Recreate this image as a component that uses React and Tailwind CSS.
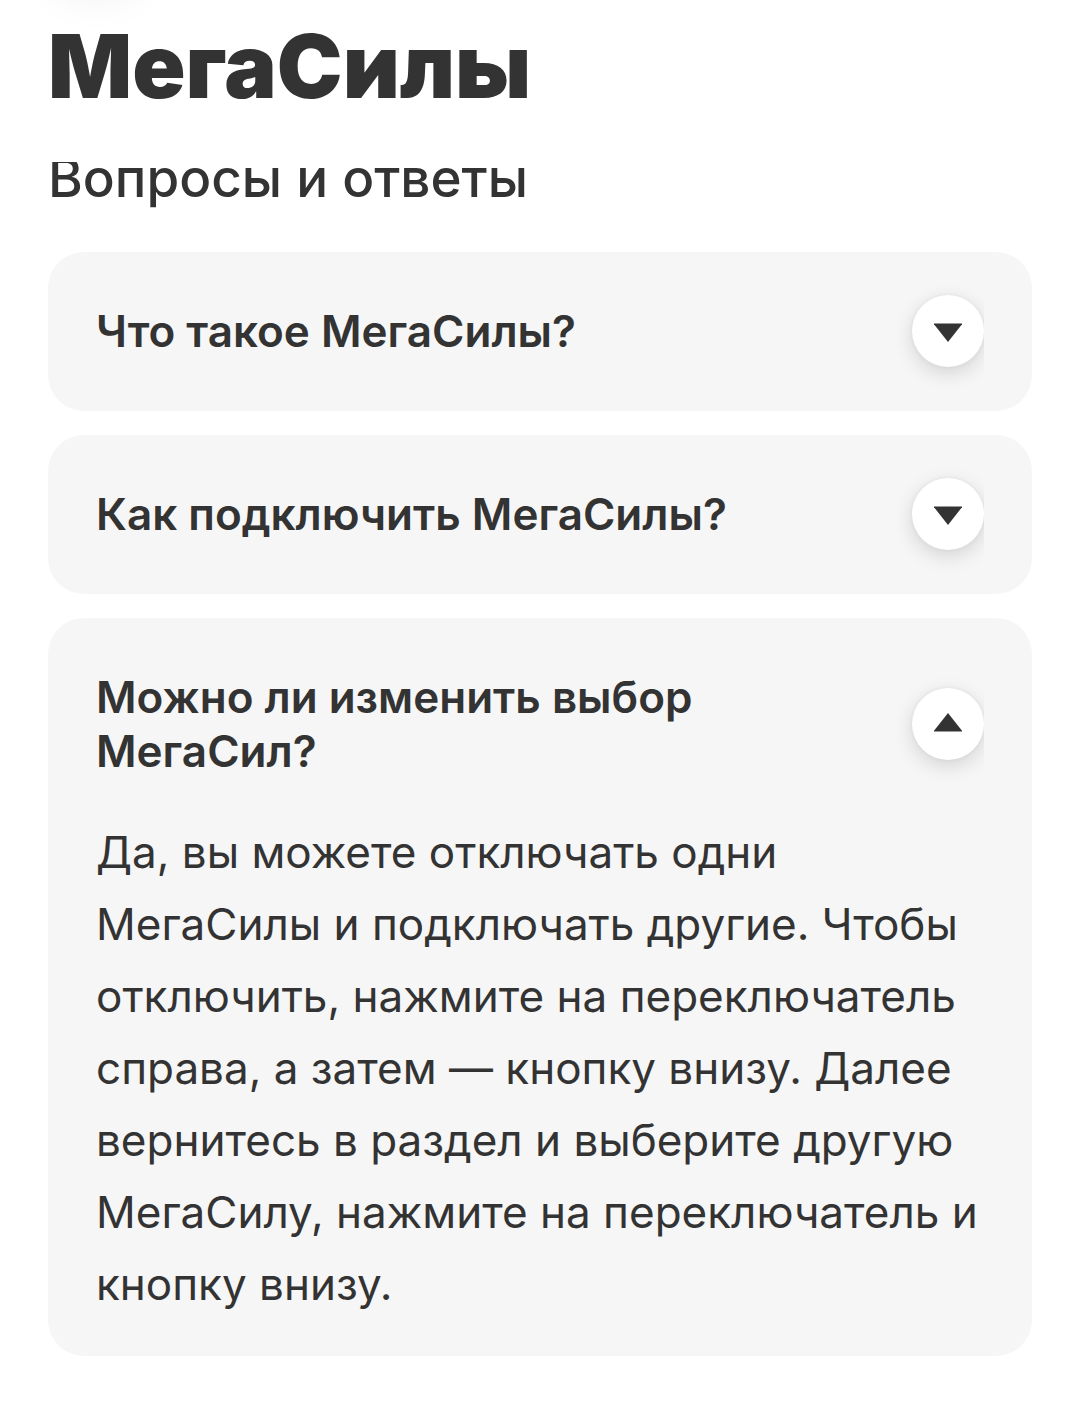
import { useState } from "react";

const faq = [
    {
        id: "what",
        question: "Что такое МегаСилы?",
        answer: "МегаСилы — это дополнительные возможности вашего тарифа.",
    },
    {
        id: "connect",
        question: "Как подключить МегаСилы?",
        answer: "Выберите МегаСилу, нажмите на переключатель справа, а затем — кнопку внизу.",
    },
    {
        id: "change",
        question: "Можно ли изменить выбор МегаСил?",
        answer: "Да, вы можете отключать одни МегаСилы и подключать другие. Чтобы отключить, нажмите на переключатель справа, а затем — кнопку внизу. Далее вернитесь в раздел и выберите другую МегаСилу, нажмите на переключатель и кнопку внизу.",
    },
];

function Arrow({ open }) {
    return (
        <span className="-my-9 shrink-0 overflow-hidden py-6 pl-6">
            <span className="flex size-[72px] items-center justify-center rounded-full bg-white shadow-[0_6px_20px_rgba(0,0,0,0.14),0_0_4px_rgba(0,0,0,0.06)]">
                <svg viewBox="0 0 28 22" className={open ? "h-[22px] w-7 rotate-180" : "h-[22px] w-7"} fill="#333333" aria-hidden="true">
                    <path d="M-0.5 3.5h29L14 22z" />
                </svg>
            </span>
        </span>
    );
}

function Question({ item, open, onToggle }) {
    return (
        <section className="rounded-[36px] bg-[#f6f6f6] px-12">
            <h3>
                <button
                    type="button"
                    aria-expanded={open}
                    aria-controls={item.id}
                    onClick={onToggle}
                    className={`flex w-full items-center justify-between pt-[52px] text-left ${open ? "pb-[38px]" : "pb-[53px]"}`}
                >
                    <span className="max-w-[640px] text-[44px] leading-[54px] font-semibold">{item.question}</span>
                    <Arrow open={open} />
                </button>
            </h3>
            {open && (
                <p id={item.id} className="pb-9 text-[44px] leading-[72px]">{item.answer}</p>
            )}
        </section>
    );
}

export default function App() {
    const [openId, setOpenId] = useState("change");

    return (
        <div className="min-h-screen bg-white font-['Inter',sans-serif] text-[#333333]">
            {/* the header stays on top, content scrolls under it */}
            <header className="sticky top-0 z-10 overflow-hidden bg-white px-12 pt-4 pb-[46px]">
                <span className="absolute -top-32 left-8 size-32 rounded-full bg-white shadow-[0_6px_36px_rgba(0,0,0,0.04)]" />
                <h1 className="relative text-[88px] leading-[100px] font-black">МегаСилы</h1>
            </header>
            <main className="px-12 pb-[70px]">
                <h2 className="-mt-[10px] mb-12 text-[53px] leading-[52px] font-medium">Вопросы и ответы</h2>
                <div className="space-y-6">
                    {faq.map((item) => (
                        <Question
                            key={item.id}
                            item={item}
                            open={openId === item.id}
                            onToggle={() => setOpenId(openId === item.id ? null : item.id)}
                        />
                    ))}
                </div>
            </main>
        </div>
    );
}
